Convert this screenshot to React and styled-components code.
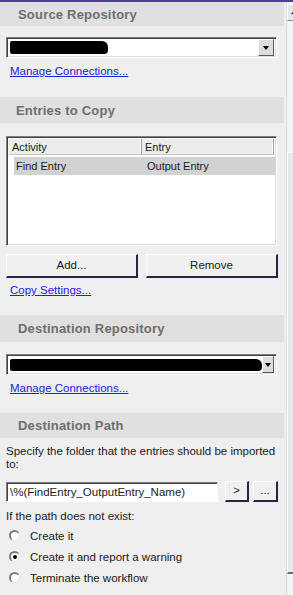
import React from 'react'
import styled, { createGlobalStyle } from 'styled-components'

const GlobalStyle = createGlobalStyle`
  html, body {
    margin: 0;
    padding: 0;
    background: #efefef;
    font-family: "Liberation Sans", Arial, sans-serif;
    font-size: 11px;
    color: #000;
  }
`

const Frame = styled.div`
  width: 293px;
  height: 595px;
  overflow: hidden;
  display: flex;
  flex-direction: column;
  background: #efefef;
`

const TopLine = styled.div`
  height: 2px;
  background: #4d3f96;
  flex-shrink: 0;
`

const Main = styled.div`
  flex: 1;
  display: flex;
  min-height: 0;
`

const Panel = styled.div`
  width: 284px;
  flex-shrink: 0;
  display: flex;
  flex-direction: column;
`

const ScrollTrack = styled.div`
  flex: 1;
  margin-left: 2px;
  display: flex;
  flex-direction: column;
  overflow: hidden;
  background: #f4f4f4;
  border-left: 1px solid #dcdcdc;
`

const ScrollBtn = styled.div`
  height: 17px;
  margin-top: 2px;
  width: 17px;
  background: #e6e6e6;
  border-top: 1px solid #fff;
  border-left: 1px solid #fff;
  border-bottom: 1px solid #888;
  border-right: 1px solid #888;
  box-sizing: border-box;
  display: flex;
  align-items: center;
  justify-content: center;
  &::after {
    content: '';
    border-left: 3px solid transparent;
    border-right: 3px solid transparent;
    border-bottom: 3px solid #000;
    margin-left: -4px;
  }
`

const ScrollThumb = styled.div`
  margin-top: 131px;
  height: 422px;
  width: 17px;
  box-sizing: border-box;
  background: #e8e8e8;
  border-top: 1px solid #fff;
  border-left: 1px solid #fff;
  border-bottom: 2px solid #6a6a6a;
`

const Header = styled.div`
  height: ${p => p.h || 24}px;
  flex-shrink: 0;
  background: #e0e0e0;
  display: flex;
  align-items: center;
  padding-left: ${p => p.indent || 18}px;
  font-size: 13px;
  font-weight: bold;
  letter-spacing: 0.2px;
  color: #6e6e6e;
`

const Body = styled.div`
  display: flex;
  flex-direction: column;
  padding: ${p => p.pad || '11px 0 0 6px'};
  height: ${p => p.h}px;
  box-sizing: border-box;
  flex-shrink: 0;
`

const Combo = styled.div`
  width: 271px;
  height: 21px;
  box-sizing: border-box;
  background: #fff;
  border-top: 1px solid #808080;
  border-left: 1px solid #808080;
  border-bottom: 1px solid #fff;
  border-right: 1px solid #fff;
  box-shadow: inset 1px 1px 0 #404040, inset -1px -1px 0 #dcdcdc;
  display: flex;
  align-items: center;
  padding: 0 2px 0 3px;
`

const Redaction = styled.span`
  display: block;
  width: ${p => p.w}px;
  height: ${p => p.hh || 13}px;
  background: #000;
  border-radius: 2px 6px 4px 2px;
  flex-shrink: 0;
`

const DropBtn = styled.div`
  margin-left: auto;
  width: 16px;
  height: 17px;
  box-sizing: border-box;
  background: #dcdcdc;
  border-top: 1px solid #fff;
  border-left: 1px solid #fff;
  border-bottom: 1px solid #5a5a5a;
  border-right: 1px solid #5a5a5a;
  display: flex;
  align-items: center;
  justify-content: center;
  &::after {
    content: '';
    border-left: 3px solid transparent;
    border-right: 3px solid transparent;
    border-top: 4px solid #000;
  }
`

const Link = styled.a`
  color: #2222dd;
  text-decoration: underline;
  font-size: 11.5px;
  margin: ${p => p.m || '6px 0 0 4px'};
  cursor: pointer;
  line-height: 14px;
`

const List = styled.div`
  width: 271px;
  height: 110px;
  box-sizing: border-box;
  background: #fff;
  border-top: 1px solid #808080;
  border-left: 1px solid #808080;
  border-bottom: 1px solid #fff;
  border-right: 1px solid #fff;
  box-shadow: inset 1px 1px 0 #404040, inset -1px -1px 0 #dcdcdc;
  padding: 2px 2px 0 2px;
`

const ListHeader = styled.div`
  display: flex;
  height: 16px;
  background: #ececec;
`

const HeadCell = styled.div`
  width: ${p => p.w}px;
  box-sizing: border-box;
  padding-left: 3px;
  line-height: 16px;
  color: #1a1a1a;
  border-right: 1px solid #a0a0a0;
  box-shadow: inset -1px 0 0 #fff;
  border-bottom: 1px solid #c8c8c8;
`

const Row = styled.div`
  display: flex;
  height: 18px;
  margin: 2px 0 0 5px;
  width: 262px;
  background: ${p => (p.selected ? '#d2d2d2' : 'transparent')};
  align-items: center;
  color: #1a1a1a;
`

const Cell = styled.div`
  width: ${p => p.w}px;
  padding-left: 2px;
`

const ButtonRow = styled.div`
  display: flex;
  gap: 8px;
  margin-top: 8px;
`

const Button = styled.button`
  width: ${p => p.w}px;
  height: ${p => p.h || 24}px;
  margin-left: ${p => p.ml || 0}px;
  box-sizing: border-box;
  background: #f0f0f0;
  border: none;
  border-top: 1px solid #fff;
  border-left: 1px solid #fff;
  border-right: 2px solid #262640;
  border-bottom: 2px solid #262640;
  font-family: "Liberation Sans", Arial, sans-serif;
  font-size: 11.5px;
  color: #1a1a1a;
  padding: 0;
  line-height: 1;
`

const Text = styled.div`
  font-size: 11.5px;
  line-height: 13px;
  margin: ${p => p.m || '0'};
  color: #1a1a1a;
`

const PathRow = styled.div`
  display: flex;
  align-items: center;
  margin-top: 10px;
`

const PathInput = styled.div`
  width: 212px;
  height: 20px;
  box-sizing: border-box;
  background: #fff;
  border-top: 1px solid #808080;
  border-left: 1px solid #808080;
  border-bottom: 1px solid #fff;
  border-right: 1px solid #fff;
  box-shadow: inset 1px 1px 0 #404040;
  font-size: 11.5px;
  line-height: 18px;
  padding-left: 3px;
  white-space: nowrap;
  color: #1a1a1a;
`

const RadioGroup = styled.div`
  display: flex;
  flex-direction: column;
  gap: 8px;
  margin-top: 6px;
`

const RadioRow = styled.label`
  display: flex;
  align-items: center;
  height: 13px;
  font-size: 11.5px;
  color: #1a1a1a;
`

const RadioDot = styled.span`
  width: 11px;
  height: 11px;
  box-sizing: border-box;
  border-radius: 50%;
  margin: 0 10px 0 3px;
  background: #fff;
  border-top: 2px solid #7a7a7a;
  border-left: 2px solid #7a7a7a;
  border-right: 1px solid #e8e8e8;
  border-bottom: 1px solid #e8e8e8;
  display: flex;
  align-items: center;
  justify-content: center;
  &::after {
    content: '';
    width: 4px;
    height: 4px;
    border-radius: 50%;
    background: ${p => (p.checked ? '#000' : 'transparent')};
  }
`

const Radio = ({ checked, children }) => (
  <RadioRow>
    <RadioDot checked={checked} />
    {children}
  </RadioRow>
)

export default function App() {
  return (
    <Frame>
      <GlobalStyle />
      <TopLine />
      <Main>
        <Panel>
          <Header h={24}>Source Repository</Header>
          <Body h={71}>
            <Combo>
              <Redaction w={98} />
              <DropBtn />
            </Combo>
            <Link>Manage Connections...</Link>
          </Body>

          <Header h={26} indent={16}>Entries to Copy</Header>
          <Body h={192} pad="13px 0 0 6px">
            <List>
              <ListHeader>
                <HeadCell w={134}>Activity</HeadCell>
                <HeadCell w={133}>Entry</HeadCell>
              </ListHeader>
              <Row selected>
                <Cell w={131}>Find Entry</Cell>
                <Cell w={131}>Output Entry</Cell>
              </Row>
            </List>
            <ButtonRow>
              <Button w={132}>Add...</Button>
              <Button w={132}>Remove</Button>
            </ButtonRow>
            <Link m="5px 0 0 4px">Copy Settings...</Link>
          </Body>

          <Header h={27}>Destination Repository</Header>
          <Body h={71} pad="12px 0 0 6px">
            <Combo>
              <Redaction w={252} hh={12} />
              <DropBtn />
            </Combo>
            <Link>Manage Connections...</Link>
          </Body>

          <Header h={25}>Destination Path</Header>
          <Body pad="7px 0 0 6px">
            <Text>Specify the folder that the entries should be imported to:</Text>
            <PathRow>
              <PathInput>\%(FindEntry_OutputEntry_Name)</PathInput>
              <Button w={24} h={21} ml={7}>&gt;</Button>
              <Button w={25} h={21} ml={4}>...</Button>
            </PathRow>
            <Text m="8px 0 0 0">If the path does not exist:</Text>
            <RadioGroup>
              <Radio>Create it</Radio>
              <Radio checked>Create it and report a warning</Radio>
              <Radio>Terminate the workflow</Radio>
            </RadioGroup>
          </Body>
        </Panel>
        <ScrollTrack>
          <ScrollBtn />
          <ScrollThumb />
        </ScrollTrack>
      </Main>
    </Frame>
  )
}
